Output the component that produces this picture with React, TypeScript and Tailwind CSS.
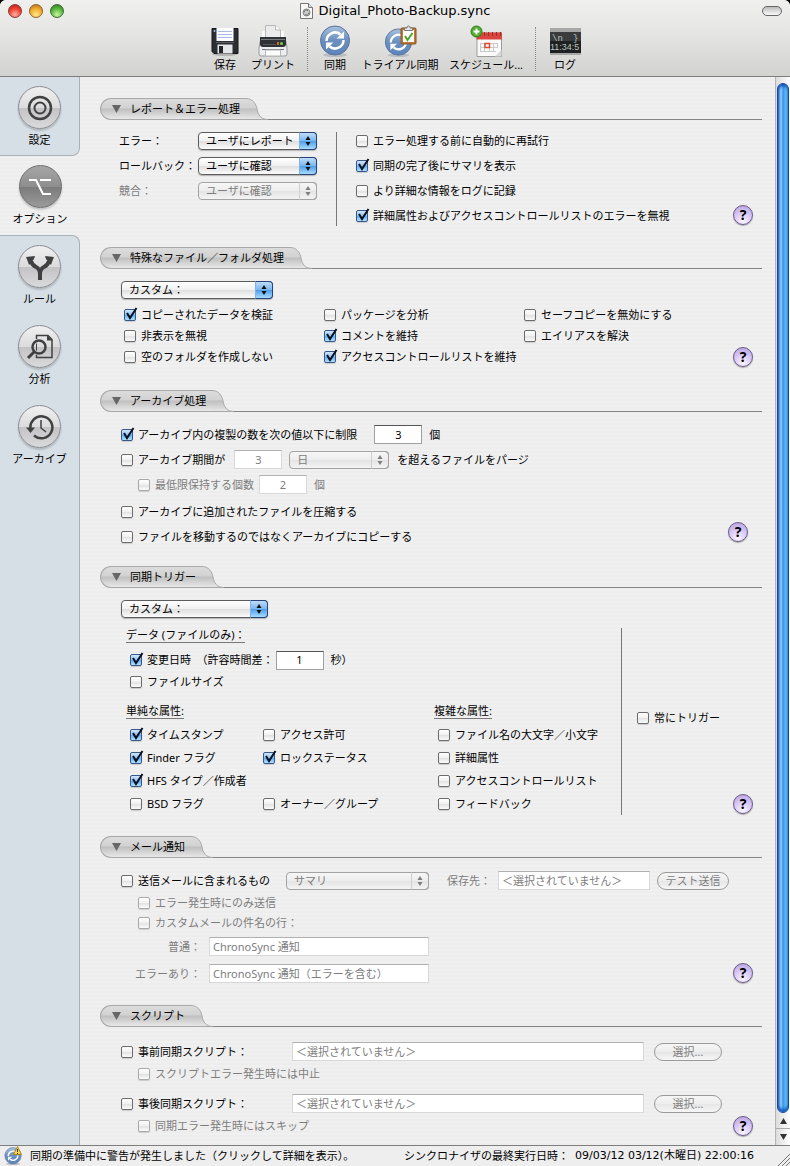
import React, { useId } from 'react';
import clsx from 'clsx';

const INK = '#404040';

/* ---------- Toolbar icons ---------- */

function FloppyIcon() {
  return (
    <svg width="28" height="30" viewBox="0 0 28 30">
      <ellipse cx="14" cy="28" rx="13" ry="2" fill="#b5b5b5" />
      <path d="M1 2.5h26v25H3l-2-2z" fill="#2b2e33" stroke="#15171a" />
      <rect x="5.500" y="2" width="17" height="13" fill="#fbfcff" />
      <path d="M7 5.500h14M7 8.500h14M7 11.500h14" stroke="#a9b9e6" />
      <path d="M5 16.500h18" stroke="#5a5e64" />
      <circle cx="3.500" cy="5" r="1" fill="#8cc4ee" />
      <rect x="6.500" y="18.500" width="15" height="9" fill="#e4e6ea" />
      <rect x="8" y="20" width="4" height="7" fill="#24262a" />
    </svg>
  );
}

function PrinterIcon() {
  return (
    <svg width="32" height="32" viewBox="0 0 32 32">
      <path d="M3 17q0-2 2-2h22q2 0 2 2l1 6v6q0 2-2 2H4q-2 0-2-2v-6z" fill="#eceef1" stroke="#9699a0" />
      <path d="M8.500 13V.5h10l5 4.500v8z" fill="#ebebeb" stroke="#b8b8b8" />
      <path d="M18.500 .5v4.500h5" fill="#fff" stroke="#b8b8b8" />
      <rect x="5" y="6" width="3" height="6" fill="#fafafa" />
      <rect x="24" y="6" width="3" height="6" fill="#fafafa" />
      <path d="M3 12h26v7q0 3-3 3H6q-3 0-3-3z" fill="#303336" />
      <path d="M4 14.500h24" stroke="#777b80" />
      <path d="M6 19.500h13" stroke="#55585c" />
      <rect x="20" y="17" width="2" height="3" fill="#d8662c" />
      <circle cx="24.500" cy="18.500" r="1.500" fill="#6fd93c" />
      <path d="M5 24.500h22" stroke="#70757b" />
      <path d="M8.500 25h15v6h-15z" fill="#fbfbfb" stroke="#b5b7ba" />
    </svg>
  );
}

function SyncDisc({ size = 32 }: { size?: number }) {
  const id = useId();
  return (
    <svg width={size} height={size} viewBox="0 0 32 32">
      <defs>
        <linearGradient id={id} x1="0" y1="0" x2="0" y2="1">
          <stop offset="0" stopColor="#a9c1de" />
          <stop offset="0.5" stopColor="#6a8fc0" />
          <stop offset="1" stopColor="#5b85bd" />
        </linearGradient>
      </defs>
      <ellipse cx="16" cy="30" rx="12" ry="2" fill="#b9bcc0" />
      <circle cx="16" cy="15.500" r="14.500" fill={`url(#${id})`} stroke="#5b7299" />
      <path d="M7.500 16a8.500 8.500 0 0 1 14-6.500" fill="none" stroke="#fff" strokeWidth="2.500" />
      <path d="M24.500 15a8.500 8.500 0 0 1-14 6.500" fill="none" stroke="#fff" strokeWidth="2.500" />
      <path d="M25 6.500v7h-7.500z" fill="#fff" />
      <path d="M7 24.500v-7h7.500z" fill="#fff" />
    </svg>
  );
}

function TrialIcon() {
  return (
    <span className="relative flex pt-[2px] pr-1">
      <SyncDisc size={29} />
      <svg className="absolute left-[16px] top-[-1px]" width="18" height="21" viewBox="0 0 18 21">
        <rect x="1" y="3" width="15" height="16" rx="1" fill="#c17a35" stroke="#865221" />
        <path d="M3 5h11v12H3z" fill="#fdfdfd" />
        <path d="M4.500 5.500V3h2.500q0-2 1.500-2T10 3h2.500v2.500z" fill="#e5e5e5" stroke="#777" />
        <path d="M5 11l2.500 4L12.500 8" fill="none" stroke="#4fa32a" strokeWidth="2" />
      </svg>
    </span>
  );
}

function CalendarIcon() {
  return (
    <svg width="33" height="33" viewBox="0 0 33 33">
      <path d="M7 8h24.500v23.500H7z" fill="#fafafa" stroke="#9b9b9b" />
      <path d="M6.500 7.500h25.500v7H6.500z" fill="#d9463f" />
      <path d="M10.500 7v4M14.500 7v4M18.500 7v4M22.500 7v4M26.500 7v4M30.500 7v4" stroke="#a32a26" />
      <path d="M10 18.500h18M10 22.500h18M10 26.500h16M10.500 18v9M14.500 18v9M19.500 18v9M23.500 18v9M27.500 18v5" stroke="#cacaca" fill="none" />
      <rect x="15" y="18.500" width="4.500" height="4" fill="#fff" stroke="#dc4a32" strokeWidth="1.500" />
      <path d="M25 31.500l6.500-7v7z" fill="#d9d9d9" />
      <circle cx="6.500" cy="6.500" r="5.500" fill="#52ac31" stroke="#2d7d19" />
      <path d="M6.500 3.500v6M3.500 6.500h6" stroke="#fff" strokeWidth="2" />
    </svg>
  );
}

function LogIcon() {
  return (
    <svg width="31" height="27" viewBox="0 0 31 27">
      <rect width="31" height="27" fill="#a7a7a7" />
      <rect y="4" width="31" height="21" fill="#1f2022" />
      <path d="M0 4h31v9H0z" fill="#3a3b3d" />
      <text x="2" y="13" fontSize="9" fill="#b9c4bd" fontFamily="Liberation Mono, monospace">\n</text>
      <text x="23" y="13" fontSize="9" fill="#b9c4bd" fontFamily="Liberation Mono, monospace">{'}'}</text>
      <text x="0" y="22" fontSize="9" fill="#b9c4bd" fontFamily="Liberation Sans, sans-serif">11:34:5</text>
    </svg>
  );
}

function ToolItem({ label, width, children }: { label: string; width: string; children: React.ReactNode }) {
  return (
    <button type="button" className={clsx('flex flex-col items-center', width)}>
      <span className="flex h-8 items-center justify-center">{children}</span>
      <span className="whitespace-nowrap leading-4">{label}</span>
    </button>
  );
}

function ToolDivider() {
  return <span className="mt-[2px] flex h-[44px] w-1 justify-center"><span className="border-l border-dotted border-[#888]" /></span>;
}

/* ---------- Sidebar ---------- */

function NavItem({ label, selected, height = 'h-20', children }: { label: string; selected?: boolean; height?: string; children: React.ReactNode }) {
  return (
    <button type="button" className={clsx('flex w-full flex-col items-center pt-[9px]', height)} aria-current={selected ? 'page' : undefined}>
      <span
        className={clsx(
          'flex size-[43px] items-center justify-center rounded-full border shadow-[0_2px_2px_rgba(0,0,0,0.18)]',
          selected
            ? 'border-[#6e6e6e] bg-[linear-gradient(#a6a6a6,#8e8e8e_50%,#7c7c7c_52%,#9a9a9a)]'
            : 'border-[#8c8c90] bg-[linear-gradient(#f0f0f1,#dcdcde_50%,#c3c3c7_52%,#dadadc)]'
        )}
      >
        {children}
      </span>
      <span className="mt-[3px] leading-4">{label}</span>
    </button>
  );
}

/* ---------- Form controls ---------- */

function Check({ label, checked, disabled }: { label: string; checked?: boolean; disabled?: boolean }) {
  return (
    <label className={clsx('flex items-center gap-[5px] whitespace-nowrap', disabled && 'text-[#7d7d7d]')}>
      <span className="relative flex">
        <input
          type="checkbox"
          defaultChecked={checked}
          disabled={disabled}
          className="peer size-3 appearance-none rounded-[2px] border border-[#6c6c6c] bg-[linear-gradient(#fff,#f0f0f0_50%,#e2e2e2_52%,#fbfbfb)] shadow-[0_1px_1px_rgba(0,0,0,0.15)] checked:border-[#35588c] checked:bg-[linear-gradient(#d4e7fb,#8cc1f3_50%,#63acef_52%,#b4e2ff)] disabled:border-[#a9a9a9]"
        />
        <svg className="pointer-events-none absolute -top-[2px] left-0 hidden peer-checked:block" width="15" height="14" viewBox="0 0 15 14">
          <path d="M3 6l3 5L12.500 1" fill="none" stroke="#0b1020" strokeWidth="2" />
        </svg>
      </span>
      {label}
    </label>
  );
}

function Popup({ value, label, width, disabled }: { value: string; label: string; width: string; disabled?: boolean }) {
  return (
    <span className={clsx('relative flex', width)}>
      <select
        aria-label={label}
        defaultValue={value}
        disabled={disabled}
        className={clsx(
          'h-[18px] w-full appearance-none rounded-[4px] border pr-5 pl-[7px] leading-4 disabled:opacity-100',
          disabled
            ? 'border-[#a3a3a3] bg-[linear-gradient(#f6f6f6,#ededed_50%,#e4e4e4_52%,#f4f4f4)] text-[#7d7d7d]'
            : 'border-[#5c5c5c] bg-[linear-gradient(#fff,#f0f0f0_50%,#dfdfdf_52%,#fbfbfb)] text-black shadow-[0_1px_1px_rgba(0,0,0,0.25)]'
        )}
      >
        <option>{value}</option>
      </select>
      <span
        className={clsx(
          'pointer-events-none absolute top-0 right-0 flex h-[18px] w-[18px] items-center justify-center rounded-r-[4px] border',
          disabled
            ? 'border-[#a3a3a3] border-l-[#cfcfcf]'
            : 'border-[#26437c] border-l-[#7fb2e6] bg-[linear-gradient(#bfdcf8,#79b5f0_50%,#4f9ee9_52%,#a6dcff)]'
        )}
      >
        <svg width="6" height="10" viewBox="0 0 6 10" fill={disabled ? '#7d7d7d' : '#111'}>
          <path d="M3 0l2.500 4h-5zM3 10l2.500-4h-5z" />
        </svg>
      </span>
    </span>
  );
}

function Field({ value, label, className, disabled }: { value: string; label: string; className: string; disabled?: boolean }) {
  return (
    <input
      type="text"
      aria-label={label}
      defaultValue={value}
      disabled={disabled}
      className={clsx(
        'h-[19px] border bg-white px-[3px] pb-px leading-4',
        disabled ? 'border-[#d8d8d8] border-t-[#b0b0b0] text-[#7d7d7d]' : 'border-[#a0a0a0] border-t-[#555]',
        className
      )}
    />
  );
}

function PushButton({ children, width }: { children: React.ReactNode; width: string }) {
  return (
    <button
      type="button"
      disabled
      className={clsx(
        'h-[18px] rounded-full border border-[#9a9a9a] bg-[linear-gradient(#f6f6f6,#ededed_50%,#e6e6e6_52%,#f6f6f6)] leading-4 text-[#7d7d7d]',
        width
      )}
    >
      {children}
    </button>
  );
}

function HelpButton({ className }: { className?: string }) {
  return (
    <button
      type="button"
      aria-label="ヘルプ"
      className={clsx(
        'flex size-5 shrink-0 items-center justify-center rounded-full border border-[#6a5a88] bg-[radial-gradient(circle_at_50%_85%,#faf4ff,#d9c8f8_50%,#b09cda)] text-sm leading-4 font-bold shadow-[0_1px_1px_rgba(0,0,0,0.3)]',
        className
      )}
    >
      ?
    </button>
  );
}

function Section({ title, children }: { title: string; children: React.ReactNode }) {
  const id = useId();
  return (
    <section>
      <div className="flex h-[22px] items-stretch">
        <button
          type="button"
          className="flex items-center rounded-l-full border border-r-0 border-[#a8a8a8] bg-[linear-gradient(#dcdcdc,#d2d2d2_45%,#bfbfbf_50%,#e8e8e8)] pr-[6px] pl-[11px]"
        >
          <svg width="9" height="8" viewBox="0 0 9 8" className="mr-[9px]">
            <path d="M0 0h9L4.500 8z" fill="#666" />
          </svg>
          <h2 className="leading-4">{title}</h2>
        </button>
        <svg width="22" height="22" viewBox="0 0 22 22">
          <defs>
            <linearGradient id={id} x1="0" y1="0" x2="0" y2="1">
              <stop offset="0" stopColor="#dcdcdc" />
              <stop offset="0.45" stopColor="#d2d2d2" />
              <stop offset="0.5" stopColor="#bfbfbf" />
              <stop offset="1" stopColor="#e8e8e8" />
            </linearGradient>
          </defs>
          <path d="M0 .5C7 .5 10 6 11 11C12 17 15 21.500 22 21.500H0z" fill={`url(#${id})`} />
          <path d="M0 .5C7 .5 10 6 11 11C12 17 15 21.500 22 21.500H0" fill="none" stroke="#a8a8a8" />
        </svg>
        <span className="flex-1 border-b border-[#858585]" />
      </div>
      {children}
    </section>
  );
}

function Heading({ children }: { children: React.ReactNode }) {
  return <h3 className="w-fit border-b border-[#777] leading-[14px]">{children}</h3>;
}

const LIGHTS = [
  'border-[#8a3a34] bg-[radial-gradient(circle_at_50%_80%,#ffb1a6,#ee3f2f_55%,#a92018)]',
  'border-[#93602a] bg-[radial-gradient(circle_at_50%_80%,#ffe98a,#f0a92c_55%,#a9661c)]',
  'border-[#3c6b33] bg-[radial-gradient(circle_at_50%_80%,#c9f7a0,#56b53c_55%,#2a7020)]'
];

export default function App() {
  return (
    <div className="bg-black">
      <div className="flex min-h-screen flex-col overflow-hidden rounded-t-md bg-[#eee] font-['Noto_Sans','Noto_Sans_CJK_JP',sans-serif] text-[11px] leading-4 text-black">
        {/* Title bar and toolbar */}
        <header className="h-[77px] border-b border-[#7e7e7e] bg-linear-to-b from-[#f0f0ef] via-[#e3e3e2] to-[#d2d2d1]">
          <div className="flex h-[22px] items-center justify-between px-2">
            <div className="flex w-20 gap-[7px]">
              {LIGHTS.map((light, i) => (
                <button key={i} type="button" aria-label={['閉じる', 'しまう', '拡大'][i]} className={clsx('size-[14px] rounded-full border', light)} />
              ))}
            </div>
            <h1 className="flex items-center gap-[6px] font-['DejaVu_Sans',sans-serif] text-[13px] leading-5">
              <svg width="13" height="16" viewBox="0 0 13 16">
                <path d="M.5.5h8l4 4v11H.5z" fill="#f7f7f7" stroke="#777" />
                <path d="M8.500.5v4h4" fill="#ddd" stroke="#777" />
                <circle cx="6.500" cy="9.500" r="3.500" fill="#ccc" stroke="#888" />
                <path d="M4 9.500a2.500 2.500 0 0 1 4-2M9 9.500a2.500 2.500 0 0 1-4 2" fill="none" stroke="#666" />
              </svg>
              Digital_Photo-Backup.sync
            </h1>
            <div className="flex w-20 justify-end">
              <button type="button" aria-label="ツールバー" className="h-[10px] w-5 rounded-full border border-[#666] bg-linear-to-b from-[#bbb] to-[#fafafa]" />
            </div>
          </div>
          <div className="flex justify-center gap-2 pt-[3px] pl-1">
            <ToolItem label="保存" width="w-8"><FloppyIcon /></ToolItem>
            <ToolItem label="プリント" width="w-12"><PrinterIcon /></ToolItem>
            <ToolDivider />
            <ToolItem label="同期" width="w-9"><SyncDisc /></ToolItem>
            <ToolItem label="トライアル同期" width="w-[78px]"><TrialIcon /></ToolItem>
            <ToolItem label="スケジュール..." width="w-[78px]"><CalendarIcon /></ToolItem>
            <ToolDivider />
            <ToolItem label="ログ" width="w-10"><LogIcon /></ToolItem>
          </div>
        </header>

        <div className="flex flex-1 bg-[repeating-linear-gradient(#f0f0f0_0px,#f0f0f0_2px,#ededed_2px,#ededed_4px)]">
          <nav className="flex w-20 shrink-0 flex-col">
            <div className="rounded-br-lg border-r border-b border-[#a9b0b6] bg-[#d6dfe6]">
              <NavItem label="設定" height="h-[78px]">
                <svg width="26" height="26" viewBox="0 0 26 26" fill="none" stroke={INK}>
                  <circle cx="13" cy="13" r="11" strokeWidth="2.500" />
                  <circle cx="13" cy="13" r="5.500" strokeWidth="2" />
                </svg>
              </NavItem>
            </div>
            <NavItem label="オプション" selected height="h-[79px]">
              <svg width="24" height="20" viewBox="0 0 24 20" fill="none" stroke="#fff" strokeWidth="2">
                <path d="M1 3h7l7 14h8M12 3h11" />
              </svg>
            </NavItem>
            <div className="flex-1 rounded-tr-lg border-t border-r border-[#a9b0b6] bg-[#d6dfe6]">
              <NavItem label="ルール">
                <svg width="30" height="28" viewBox="0 0 30 28" fill="none" stroke={INK} strokeWidth="4">
                  <path d="M15 27v-6q0-5-4-7t-5-6M15 21q0-5 4-7t5-6" />
                  <path d="M1 4l9-1-1 3-5 6-1-3zM29 4l-9-1 1 3 5 6 1-3z" fill={INK} stroke="none" />
                </svg>
              </NavItem>
              <NavItem label="分析">
                <svg width="28" height="26" viewBox="0 0 28 26" fill="none" stroke={INK}>
                  <path d="M10.500 5V1.500H22l4 4V23.500H10.500V21" strokeWidth="1.500" />
                  <path d="M21 1l5.500 5.500H21z" fill={INK} stroke="none" />
                  <circle cx="13" cy="13" r="6.500" strokeWidth="2.500" />
                  <path d="M10.500 9.500v7" />
                  <path d="M8 18l-6 6" strokeWidth="3" />
                </svg>
              </NavItem>
              <NavItem label="アーカイブ">
                <svg width="28" height="26" viewBox="0 0 28 26" fill="none" stroke={INK} strokeWidth="2.500">
                  <path d="M4.500 15A11 11 0 1 1 8 21.500" />
                  <path d="M0 13.500h9L4.500 19z" fill={INK} stroke="none" />
                  <path d="M15 6v8l5 4" strokeWidth="1.500" />
                </svg>
              </NavItem>
            </div>
          </nav>

          <main className="min-w-0 flex-1 pt-[21px] pr-[13px] pl-5">
            <Section title="レポート＆エラー処理">
              <div className="flex pt-2 pr-[9px] pb-[19px] pl-[19px]">
                <div className="grid w-[198px] auto-rows-[25px] grid-cols-[79px_119px] items-center">
                  <span>エラー：</span>
                  <Popup label="エラー" value="ユーザにレポート" width="w-full" />
                  <span className="whitespace-nowrap">ロールバック：</span>
                  <Popup label="ロールバック" value="ユーザに確認" width="w-full" />
                  <span className="text-[#7d7d7d]">競合：</span>
                  <Popup label="競合" value="ユーザに確認" width="w-full" disabled />
                </div>
                <div className="mt-1 mb-[2px] ml-[19px] border-l border-[#777]" />
                <div className="grid auto-rows-[25px] items-center pl-[19px]">
                  <Check label="エラー処理する前に自動的に再試行" />
                  <Check label="同期の完了後にサマリを表示" checked />
                  <Check label="より詳細な情報をログに記録" />
                  <Check label="詳細属性およびアクセスコントロールリストのエラーを無視" checked />
                </div>
                <HelpButton className="mb-[3px] ml-auto self-end" />
              </div>
            </Section>

            <Section title="特殊なファイル／フォルダ処理">
              <div className="pt-3 pr-[9px] pb-[23px] pl-[21px]">
                <Popup label="ファイル処理" value="カスタム：" width="w-[152px]" />
                <div className="mt-[5px] flex items-end justify-between pl-[3px]">
                  <div className="grid auto-rows-[21px] grid-cols-[200px_200px_auto] items-center">
                    <Check label="コピーされたデータを検証" checked />
                    <Check label="パッケージを分析" />
                    <Check label="セーフコピーを無効にする" />
                    <Check label="非表示を無視" />
                    <Check label="コメントを維持" checked />
                    <Check label="エイリアスを解決" />
                    <Check label="空のフォルダを作成しない" />
                    <Check label="アクセスコントロールリストを維持" checked />
                  </div>
                  <HelpButton />
                </div>
              </div>
            </Section>

            <Section title="アーカイブ処理">
              <div className="flex items-end justify-between pt-[10px] pr-[14px] pb-[17px] pl-[21px]">
                <div>
                  <div className="flex h-[25px] items-center">
                    <Check label="アーカイブ内の複製の数を次の値以下に制限" checked />
                    <Field label="複製の数" value="3" className="mr-[7px] ml-[17px] w-[48px] text-center" />
                    個
                  </div>
                  <div className="flex h-[25px] items-center">
                    <Check label="アーカイブ期間が" />
                    <Field label="期間" value="3" className="mr-[7px] ml-[9px] w-[48px] text-center" disabled />
                    <Popup label="期間の単位" value="日" width="w-[100px] mr-2" disabled />
                    を超えるファイルをパージ
                  </div>
                  <div className="flex h-[25px] items-center pl-[17px] text-[#7d7d7d]">
                    <Check label="最低限保持する個数" disabled />
                    <Field label="最低限保持する個数" value="2" className="mr-[7px] ml-[5px] w-[48px] text-center" disabled />
                    個
                  </div>
                  <div className="mt-[2px] grid auto-rows-[25px] items-center">
                    <Check label="アーカイブに追加されたファイルを圧縮する" />
                    <Check label="ファイルを移動するのではなくアーカイブにコピーする" />
                  </div>
                </div>
                <HelpButton className="mb-[7px]" />
              </div>
            </Section>

            <Section title="同期トリガー">
              <div className="pt-3 pr-[9px] pb-[21px] pl-[21px]">
                <Popup label="同期トリガー" value="カスタム：" width="w-[147px]" />
                <div className="mt-[10px] flex">
                  <div className="w-[500px] pl-[5px]">
                    <Heading>データ (ファイルのみ)：</Heading>
                    <div className="mt-[6px] pl-1">
                      <div className="flex h-[22px] items-center">
                        <Check label="変更日時　（許容時間差：" checked />
                        <Field label="許容時間差" value="1" className="mr-[7px] ml-[2px] w-[48px] text-center" />
                        秒）
                      </div>
                      <div className="flex h-[22px] items-center">
                        <Check label="ファイルサイズ" />
                      </div>
                    </div>
                    <div className="mt-[11px] flex">
                      <div className="w-[308px]">
                        <Heading>単純な属性:</Heading>
                        <div className="mt-1 grid auto-rows-[23px] grid-cols-[133px_auto] items-center pl-1">
                          <Check label="タイムスタンプ" checked />
                          <Check label="アクセス許可" />
                          <Check label="Finder フラグ" checked />
                          <Check label="ロックステータス" checked />
                          <Check label="HFS タイプ／作成者" checked />
                          <span />
                          <Check label="BSD フラグ" />
                          <Check label="オーナー／グループ" />
                        </div>
                      </div>
                      <div>
                        <Heading>複雑な属性:</Heading>
                        <div className="mt-1 grid auto-rows-[23px] items-center pl-1">
                          <Check label="ファイル名の大文字／小文字" />
                          <Check label="詳細属性" />
                          <Check label="アクセスコントロールリスト" />
                          <Check label="フィードバック" />
                        </div>
                      </div>
                    </div>
                  </div>
                  <div className="border-l border-[#777]" />
                  <div className="flex flex-1 items-center pl-[15px]">
                    <div className="pb-2">
                      <Check label="常にトリガー" />
                    </div>
                    <HelpButton className="mb-px ml-auto self-end" />
                  </div>
                </div>
              </div>
            </Section>

            <Section title="メール通知">
              <div className="pt-[10px] pr-[9px] pb-[18px] pl-[21px]">
                <div className="flex h-[25px] items-center text-[#7d7d7d]">
                  <div className="w-[165px] text-black">
                    <Check label="送信メールに含まれるもの" />
                  </div>
                  <Popup label="送信内容" value="サマリ" width="w-[143px]" disabled />
                  <span className="ml-[18px] w-[51px] whitespace-nowrap">保存先：</span>
                  <Field label="保存先" value="＜選択されていません＞" className="w-[152px]" disabled />
                  <span className="ml-[7px] flex"><PushButton width="w-[72px]">テスト送信</PushButton></span>
                </div>
                <div className="flex items-end justify-between">
                  <div>
                    <div className="grid auto-rows-[20px] items-center pl-[17px]">
                      <Check label="エラー発生時にのみ送信" disabled />
                      <Check label="カスタムメールの件名の行：" disabled />
                    </div>
                    <div className="grid auto-rows-[27px] grid-cols-[80px_220px] items-center gap-x-2 text-[#7d7d7d]">
                      <span className="text-right">普通：</span>
                      <Field label="普通" value="ChronoSync 通知" className="w-full" disabled />
                      <span className="text-right">エラーあり：</span>
                      <Field label="エラーあり" value="ChronoSync 通知（エラーを含む）" className="w-full" disabled />
                    </div>
                  </div>
                  <HelpButton className="mb-1" />
                </div>
              </div>
            </Section>

            <Section title="スクリプト">
              <div className="pt-3 pr-[9px] pb-2 pl-[21px]">
                <div className="flex h-[25px] items-center pr-[31px]">
                  <div className="w-[171px]"><Check label="事前同期スクリプト：" /></div>
                  <Field label="事前同期スクリプト" value="＜選択されていません＞" className="mr-[10px] min-w-0 flex-1" disabled />
                  <PushButton width="w-[68px]">選択...</PushButton>
                </div>
                <div className="flex h-5 items-center pl-[17px]">
                  <Check label="スクリプトエラー発生時には中止" disabled />
                </div>
                <div className="mt-[7px] flex h-[25px] items-center pr-[31px]">
                  <div className="w-[171px]"><Check label="事後同期スクリプト：" /></div>
                  <Field label="事後同期スクリプト" value="＜選択されていません＞" className="mr-[10px] min-w-0 flex-1" disabled />
                  <PushButton width="w-[68px]">選択...</PushButton>
                </div>
                <div className="flex h-5 items-center justify-between pl-[17px]">
                  <Check label="同期エラー発生時にはスキップ" disabled />
                  <HelpButton />
                </div>
              </div>
            </Section>
          </main>

          {/* Scroll bar */}
          <div className="flex w-[15px] shrink-0 flex-col border-l border-[#b5b5b5] bg-linear-to-r from-[#dcdcdc] to-white pt-[6px]">
            <div className="mx-px flex-1 rounded-full border border-[#1746a0] bg-[linear-gradient(90deg,#4d8fe0,#a5cdf6_30%,#2f93ee_50%,#5cbcfb_75%,#9be4ff)] shadow-[inset_0_2px_3px_#0d4bb0,inset_0_-3px_3px_#1562c4]" />
            <button type="button" aria-label="上へ" className="flex h-4 items-center justify-center border-b border-[#aaa]">
              <svg width="7" height="6" viewBox="0 0 7 6"><path d="M3.500 0L7 6H0z" fill="#333" /></svg>
            </button>
            <button type="button" aria-label="下へ" className="flex h-4 items-center justify-center">
              <svg width="7" height="6" viewBox="0 0 7 6"><path d="M3.500 6L7 0H0z" fill="#333" /></svg>
            </button>
          </div>
        </div>

        {/* Status bar */}
        <footer className="flex h-[21px] items-center justify-between border-t border-[#7e7e7e] bg-[#eee] pl-1">
          <button type="button" className="flex items-center gap-2 whitespace-nowrap">
            <span className="relative flex">
              <SyncDisc size={18} />
              <svg className="absolute -top-px right-0" width="9" height="9" viewBox="0 0 9 9">
                <path d="M4.500.5L8.500 8.500h-8z" fill="#ffd84a" stroke="#a8841b" />
                <path d="M4.500 3v3M4.500 7v1" stroke="#333" />
              </svg>
            </span>
            同期の準備中に警告が発生しました（クリックして詳細を表示）。
          </button>
          <div className="flex h-full items-center">
            <span className="w-[171px] whitespace-nowrap">シンクロナイザの最終実行日時：</span>
            <span className="mr-[19px] min-w-[183px] whitespace-nowrap font-['DejaVu_Sans','Noto_Sans_CJK_JP',sans-serif]">09/03/12 03/12(木曜日) 22:00:16</span>
            <svg className="self-end" width="13" height="13" viewBox="0 0 13 13" stroke="#777">
              <path d="M1 13L13 1M5 13l8-8M9 13l4-4" />
            </svg>
          </div>
        </footer>
      </div>
    </div>
  );
}
